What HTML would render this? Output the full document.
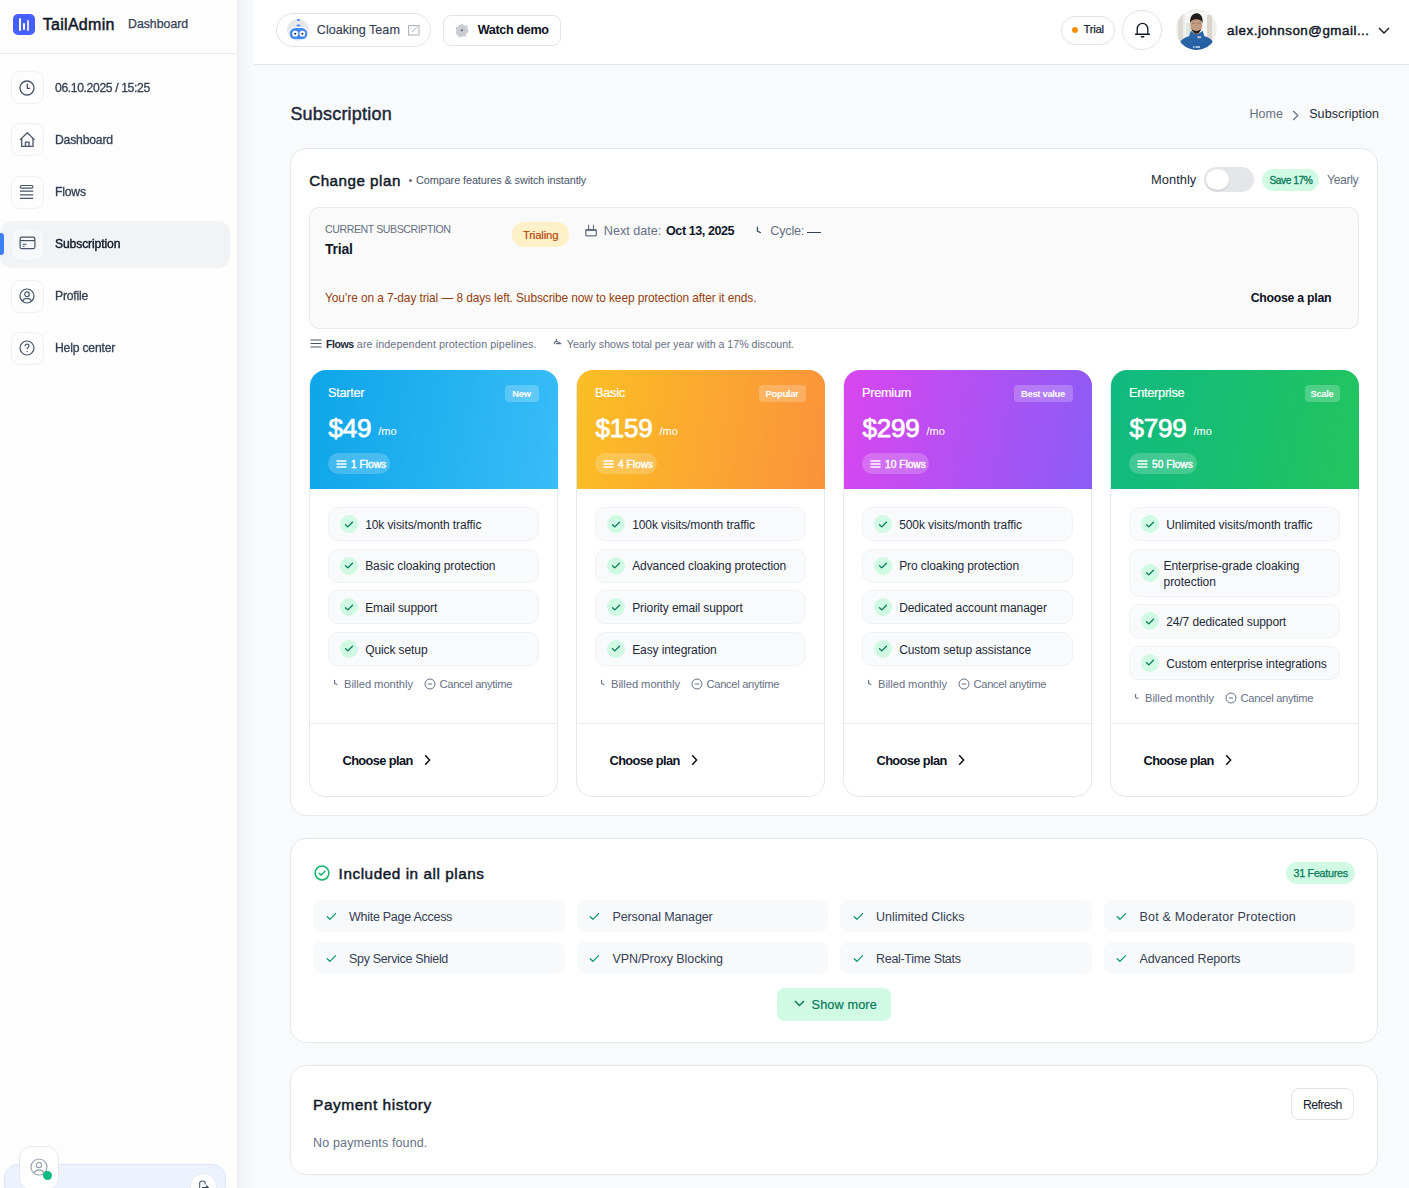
<!DOCTYPE html>
<html><head><meta charset="utf-8"><title>Subscription</title>
<style>
html,body{margin:0;padding:0;}
body{width:1409px;height:1188px;overflow:hidden;position:relative;background:#f9fafb;font-family:"Liberation Sans",sans-serif;}
.t{position:absolute;white-space:nowrap;line-height:1;}
.g{will-change:transform;}
.b{position:absolute;box-sizing:border-box;}
</style></head><body>

<div class="b" style="left:0.00px;top:0.00px;width:238.00px;height:1188.00px;background:#fdfdfd;border-right:1px solid #e9ebef;"></div>
<div class="b" style="left:238.00px;top:0.00px;width:16.00px;height:1188.00px;background:linear-gradient(90deg,#eff1f4,#f6f7f9 60%,#f9fafb);"></div>
<div class="b" style="left:0.00px;top:53.00px;width:237.00px;height:1.00px;background:#e9ebee;"></div>
<div class="b" style="left:13.00px;top:14.00px;width:21.50px;height:21.00px;background:#465fff;border-radius:5px;"></div>
<div class="b" style="left:18.80px;top:18.00px;width:2.20px;height:12.50px;background:#fff;border-radius:1px;"></div>
<div class="b" style="left:23.00px;top:23.00px;width:2.00px;height:7.00px;background:#fff;border-radius:1px;"></div>
<div class="b" style="left:27.00px;top:20.00px;width:2.00px;height:10.50px;background:#dfe3ff;border-radius:1px;"></div>
<div class="t" style="left:42.70px;top:17.46px;font-size:16px;font-weight:400;color:#101828;letter-spacing:0.3px;-webkit-text-stroke:0.5px #101828;">TailAdmin</div>
<div class="t" style="left:128.00px;top:18.39px;font-size:12.3px;font-weight:400;color:#344054;letter-spacing:0px;-webkit-text-stroke:0.25px #344054;">Dashboard</div>
<div class="b" style="left:0.00px;top:220.70px;width:230.00px;height:47.10px;background:#f2f3f5;border-radius:12px;"></div>
<div class="b" style="left:0.00px;top:232.60px;width:4.00px;height:22.80px;background:#3b82f6;border-radius:0 3px 3px 0;"></div>
<div class="b" style="left:10.50px;top:71.00px;width:33.00px;height:33.00px;background:#fdfdfe;border:1px solid #eef0f3;border-radius:9px;"></div>
<div class="t g" style="left:54.50px;top:81.67px;font-size:12.2px;font-weight:400;color:#344054;letter-spacing:-0.38px;-webkit-text-stroke:0.3px #344054;">06.10.2025 / 15:25</div>
<div class="b" style="left:10.50px;top:123.00px;width:33.00px;height:33.00px;background:#fdfdfe;border:1px solid #eef0f3;border-radius:9px;"></div>
<div class="t g" style="left:54.50px;top:133.67px;font-size:12.2px;font-weight:400;color:#344054;letter-spacing:-0.2px;-webkit-text-stroke:0.3px #344054;">Dashboard</div>
<div class="b" style="left:10.50px;top:175.50px;width:33.00px;height:33.00px;background:#fdfdfe;border:1px solid #eef0f3;border-radius:9px;"></div>
<div class="t g" style="left:54.50px;top:186.17px;font-size:12.2px;font-weight:400;color:#344054;letter-spacing:-0.2px;-webkit-text-stroke:0.3px #344054;">Flows</div>
<div class="b" style="left:10.50px;top:227.50px;width:33.00px;height:33.00px;background:#f7f8fa;border:1px solid #eef0f3;border-radius:9px;"></div>
<div class="t g" style="left:54.50px;top:238.17px;font-size:12.2px;font-weight:400;color:#101828;letter-spacing:-0.15px;-webkit-text-stroke:0.4px #101828;">Subscription</div>
<div class="b" style="left:10.50px;top:279.50px;width:33.00px;height:33.00px;background:#fdfdfe;border:1px solid #eef0f3;border-radius:9px;"></div>
<div class="t g" style="left:54.50px;top:290.17px;font-size:12.2px;font-weight:400;color:#344054;letter-spacing:-0.2px;-webkit-text-stroke:0.3px #344054;">Profile</div>
<div class="b" style="left:10.50px;top:331.50px;width:33.00px;height:33.00px;background:#fdfdfe;border:1px solid #eef0f3;border-radius:9px;"></div>
<div class="t g" style="left:54.50px;top:342.17px;font-size:12.2px;font-weight:400;color:#344054;letter-spacing:-0.2px;-webkit-text-stroke:0.3px #344054;">Help center</div>
<svg class="b" style="left:18.50px;top:79.50px;" width="16" height="16" viewBox="0 16 16" fill="none"><circle cx="8" cy="8" r="7" stroke="#475467" stroke-width="1.3"/><path d="M8.3 3.6V8.3H11.2" stroke="#475467" stroke-width="1.3"/></svg>
<svg class="b" style="left:18.50px;top:131.00px;" width="16" height="17" viewBox="0 0 16 17" fill="none"><path d="M1 8.9L8.3 1.8L15.6 8.9" stroke="#475467" stroke-width="1.3" stroke-linejoin="round"/><path d="M2.7 7.2V15.4H14V7.2" stroke="#475467" stroke-width="1.3"/><path d="M6.5 15.4V11.2H10V15.4" stroke="#475467" stroke-width="1.3"/></svg>
<svg class="b" style="left:19.00px;top:183.50px;" width="16" height="16" viewBox="0 0 16 16" fill="none"><rect x="1.2" y="1.5" width="12.8" height="2.6" rx="1.3" stroke="#475467" stroke-width="1.1"/><path d="M1 7.2H14.2M1 10.8H14.2M1 14.4H14.2" stroke="#475467" stroke-width="1.2"/></svg>
<svg class="b" style="left:18.50px;top:236.00px;" width="17" height="14" viewBox="0 0 17 14" fill="none"><rect x="1.1" y="1.1" width="14.8" height="11.6" rx="1.8" stroke="#475467" stroke-width="1.2"/><path d="M1.1 4.6H15.9" stroke="#475467" stroke-width="1.2"/><path d="M3.6 8.2H7.4M3.6 10.2H5.6" stroke="#475467" stroke-width="1.1"/></svg>
<svg class="b" style="left:18.50px;top:287.50px;" width="16" height="16" viewBox="0 0 16 16" fill="none"><circle cx="8" cy="8" r="7" stroke="#475467" stroke-width="1.2"/><circle cx="8" cy="6.2" r="2.3" stroke="#475467" stroke-width="1.2"/><path d="M3.4 13.2C4.4 11.2 6 10.4 8 10.4C10 10.4 11.6 11.2 12.6 13.2" stroke="#475467" stroke-width="1.2"/></svg>
<svg class="b" style="left:18.50px;top:339.50px;" width="16" height="16" viewBox="0 0 16 16" fill="none"><circle cx="8" cy="8" r="7" stroke="#475467" stroke-width="1.2"/><path d="M6 6.2C6 5 6.9 4.2 8 4.2C9.1 4.2 10 5 10 6.1C10 7.3 8.2 7.6 8.2 9.2" stroke="#475467" stroke-width="1.2"/><circle cx="8.1" cy="11.6" r="0.7" fill="#475467"/></svg>
<div class="b" style="left:4.30px;top:1164.00px;width:221.40px;height:36.00px;background:#ecf3fe;border:1px solid #d9e6fb;border-radius:14px;"></div>
<div class="b" style="left:18.70px;top:1146.20px;width:40.60px;height:43.80px;background:#fff;border:1px solid #e6e8ec;border-radius:12px;"></div>
<svg class="b" style="left:30.00px;top:1157.50px;" width="18" height="18" viewBox="0 0 18 18" fill="none"><circle cx="9" cy="9" r="8" stroke="#98a2b3" stroke-width="1.2"/><circle cx="9" cy="7" r="2.6" stroke="#98a2b3" stroke-width="1.2"/><path d="M4 14.8C5 12.6 6.8 11.8 9 11.8C11.2 11.8 13 12.6 14 14.8" stroke="#98a2b3" stroke-width="1.2"/></svg>
<div class="b" style="left:43.00px;top:1171.00px;width:9.00px;height:9.00px;background:#10b981;border-radius:50%;"></div>
<div class="b" style="left:189.50px;top:1173.00px;width:27.50px;height:32.00px;background:#fff;border:1px solid #e6e8ec;border-radius:13px;"></div>
<svg class="b" style="left:197.50px;top:1180.00px;" width="12" height="9" viewBox="0 0 12 9" fill="none"><path d="M1.6 9V3.6C1.6 2 2.5 1.1 4 1.1H4.8C6.3 1.1 7.2 2 7.2 3.6V4.6" stroke="#667085" stroke-width="1.3"/><path d="M4.5 7.6H10.2M8.6 6L10.3 7.6" stroke="#344054" stroke-width="1.3" stroke-linecap="round"/></svg>
<div class="b" style="left:254.00px;top:0.00px;width:1155.00px;height:65.00px;background:#fff;border-bottom:1px solid #e4e7ec;"></div>
<div class="b" style="left:276.00px;top:13.20px;width:154.70px;height:33.40px;background:#fff;border:1px solid #e1e4ea;border-radius:17px;"></div>
<svg class="b" style="left:287.00px;top:18.90px;" width="22" height="22" viewBox="0 0 22 22" fill="none"><circle cx="11" cy="11" r="11" fill="#e5e7eb"/><rect x="1.6" y="8.1" width="19.8" height="13.2" rx="6.6" fill="#fff"/><rect x="2.6" y="9.1" width="17.8" height="11.2" rx="5.6" fill="#4688ee"/><circle cx="8.2" cy="14.7" r="2.9" fill="#fff"/><circle cx="15.4" cy="14.7" r="2.9" fill="#fff"/><circle cx="8.2" cy="14.7" r="1.05" fill="#1f2937"/><circle cx="15.4" cy="14.7" r="1.05" fill="#1f2937"/><ellipse cx="11.5" cy="1" rx="1.6" ry="0.9" fill="#4688ee"/><path d="M11.5 2V5.5" stroke="#f3f4f6" stroke-width="0.8"/><path d="M9.3 7.3C9.6 6.2 10.5 5.6 11.5 5.6C12.5 5.6 13.4 6.2 13.7 7.3Z" fill="#4688ee"/></svg>
<div class="t" style="left:316.80px;top:23.93px;font-size:12.6px;font-weight:400;color:#344054;letter-spacing:0px;-webkit-text-stroke:0.15px #344054;">Cloaking Team</div>
<svg class="b" style="left:407.50px;top:25.00px;" width="12" height="11" viewBox="0 0 12 11" fill="none"><rect x="0.6" y="0.6" width="10.4" height="9.4" stroke="#b0b6c0" stroke-width="1.1"/><path d="M4 7L9.6 1.6" stroke="#b0b6c0" stroke-width="1"/></svg>
<div class="b" style="left:442.50px;top:15.10px;width:118.20px;height:30.70px;background:#fff;border:1px solid #e1e4ea;border-radius:8px;"></div>
<svg class="b" style="left:455.00px;top:23.00px;" width="14" height="15" viewBox="0 0 14 15" fill="none"><path d="M7 0.6L9.3 2.4L12.2 2.6L12.7 5.6L13.6 8.3L11.6 10.6L10.6 13.4L7.6 13.5L4.7 14.4L2.7 12.2L0.6 10.5L1.3 7.5L0.6 4.6L3.2 3.1Z" fill="#c9ccd2"/><path d="M5.3 7.4L7.6 6.1V8.6Z" fill="#4b5563"/></svg>
<div class="t" style="left:477.70px;top:24.13px;font-size:12.6px;font-weight:700;color:#0c111d;letter-spacing:-0.35px;">Watch demo</div>
<div class="b" style="left:1061.10px;top:16.20px;width:53.70px;height:28.40px;background:#fff;border:1px solid #e1e4ea;border-radius:14px;"></div>
<div class="b" style="left:1072.00px;top:26.90px;width:6.00px;height:6.00px;background:#f79009;border-radius:50%;"></div>
<div class="t" style="left:1083.40px;top:24.37px;font-size:11.5px;font-weight:400;color:#1d2939;letter-spacing:-0.3px;-webkit-text-stroke:0.25px #1d2939;">Trial</div>
<div class="b" style="left:1122.00px;top:10.10px;width:39.60px;height:39.60px;background:#fff;border:1px solid #e1e4ea;border-radius:50%;"></div>
<svg class="b" style="left:1133.50px;top:21.00px;" width="17" height="18" viewBox="0 0 17 18" fill="none"><path d="M3.2 13V8.2C3.2 4.8 5.5 2.3 8.5 2.3C11.5 2.3 13.8 4.8 13.8 8.2V13" stroke="#111827" stroke-width="1.3"/><path d="M1.6 13.3H15.4" stroke="#111827" stroke-width="1.4" stroke-linecap="round"/><path d="M7.3 15.8H9.7" stroke="#111827" stroke-width="1.5" stroke-linecap="round"/></svg>
<svg class="b" style="left:1175.70px;top:8.80px;" width="41" height="41" viewBox="0 0 41 41" fill="none"><defs><clipPath id="av"><circle cx="20.5" cy="20.5" r="20.4"/></clipPath><linearGradient id="hood" x1="0" y1="0" x2="1" y2="1"><stop offset="0" stop-color="#2f6db0"/><stop offset="1" stop-color="#21589a"/></linearGradient></defs><g clip-path="url(#av)"><rect width="41" height="41" fill="#eeeeec"/><rect x="9" y="3" width="23" height="26" fill="#f6f7f5"/><rect x="2" y="6" width="5" height="30" fill="#ddd9d2"/><rect x="31" y="6" width="5" height="30" fill="#ddd5cc"/><rect x="10" y="14" width="5" height="12" fill="#dfe6dc"/><path d="M1.5 41C2.5 32 7.5 28.5 13 27.2L15 21.5C17 25.5 24 25.5 26.5 21.5L28.5 27.2C34 28.5 38.5 32 39.5 41Z" fill="url(#hood)"/><path d="M21 27.2H25.5L24.5 29.2H22Z" fill="#c9cdd2"/><rect x="17.8" y="20" width="5.6" height="5" fill="#b08468"/><ellipse cx="20.3" cy="16.2" rx="6" ry="7.4" fill="#c39c80"/><path d="M14.1 14.6C13.6 7.6 16.8 4.3 20.4 4.3C24.1 4.3 27.1 6.6 26.6 14.4C25.8 11.4 23.6 10.2 20.3 10.2C17 10.2 14.9 11.4 14.1 14.6Z" fill="#1f1b1a"/><path d="M15.3 19.5C16.3 23.5 18.4 24.6 20.3 24.6C22.3 24.6 24.3 23.5 25.2 19.5C23.8 21.3 22.2 21.9 20.3 21.9C18.4 21.9 16.8 21.3 15.3 19.5Z" fill="#2b221e"/><path d="M16 14.2H19.3M21.5 14.2H24.8" stroke="#6d5d55" stroke-width="0.9" opacity="0.6"/><path d="M17 38H18.5M19.5 38H24" stroke="#cfe1f5" stroke-width="1.3"/></g></svg>
<div class="t" style="left:1227.10px;top:24.26px;font-size:13.4px;font-weight:400;color:#101828;letter-spacing:0.5px;-webkit-text-stroke:0.45px #101828;">alex.johnson@gmail...</div>
<svg class="b" style="left:1377.50px;top:26.50px;" width="12" height="7" viewBox="0 0 12 7" fill="none"><path d="M1 1L6 6L11 1" stroke="#111827" stroke-width="1.4"/></svg>
<div class="t" style="left:290.40px;top:104.76px;font-size:18px;font-weight:400;color:#1d2939;letter-spacing:0.2px;-webkit-text-stroke:0.45px #1d2939;">Subscription</div>
<div class="t" style="left:1249.60px;top:108.42px;font-size:12.5px;font-weight:400;color:#667085;letter-spacing:0px;">Home</div>
<svg class="b" style="left:1292.00px;top:109.50px;" width="7" height="11" viewBox="0 0 7 11" fill="none"><path d="M1.2 1L5.8 5.5L1.2 10" stroke="#667085" stroke-width="1.2"/></svg>
<div class="t" style="left:1309.20px;top:108.42px;font-size:12.5px;font-weight:400;color:#1d2939;letter-spacing:0.1px;">Subscription</div>
<div class="b" style="left:290.00px;top:148.00px;width:1088.00px;height:668.00px;background:#fff;border:1px solid #e4e7ec;border-radius:16px;"></div>
<div class="t" style="left:309.20px;top:172.53px;font-size:15.2px;font-weight:400;color:#101828;letter-spacing:0.5px;-webkit-text-stroke:0.45px #101828;">Change plan</div>
<div class="b" style="left:409.00px;top:179.00px;width:3.00px;height:3.00px;background:#667085;border-radius:50%;"></div>
<div class="t" style="left:416.00px;top:174.97px;font-size:10.9px;font-weight:400;color:#475467;letter-spacing:-0.1px;">Compare features &amp; switch instantly</div>
<div class="t" style="left:1151.10px;top:173.58px;font-size:12.9px;font-weight:400;color:#1d2939;letter-spacing:0px;">Monthly</div>
<div class="b" style="left:1204.00px;top:167.30px;width:49.80px;height:24.50px;background:#e4e6ea;border-radius:13px;"></div>
<div class="b" style="left:1206.30px;top:169.30px;width:23.00px;height:20.70px;background:#fff;border-radius:50%;box-shadow:0 1px 2px rgba(16,24,40,.15);"></div>
<div class="b" style="left:1262.10px;top:169.00px;width:56.60px;height:22.00px;background:#d1fae5;border-radius:11px;"></div>
<div class="t" style="left:1269.50px;top:175.67px;font-size:10.2px;font-weight:400;color:#047857;letter-spacing:-0.45px;-webkit-text-stroke:0.3px #047857;">Save 17%</div>
<div class="t" style="left:1327.00px;top:174.17px;font-size:12.2px;font-weight:400;color:#667085;letter-spacing:-0.35px;">Yearly</div>
<div class="b" style="left:309.00px;top:207.00px;width:1050.00px;height:122.00px;background:#fafafa;border:1px solid #e4e7ec;border-radius:10px;"></div>
<div class="t" style="left:325.00px;top:224.03px;font-size:10.6px;font-weight:400;color:#667085;letter-spacing:-0.42px;">CURRENT SUBSCRIPTION</div>
<div class="t" style="left:325.00px;top:242.15px;font-size:14px;font-weight:700;color:#101828;letter-spacing:-0.2px;">Trial</div>
<div class="b" style="left:512.00px;top:222.00px;width:57.30px;height:24.70px;background:#fef0c7;border-radius:12px;"></div>
<div class="t" style="left:522.90px;top:229.83px;font-size:11.3px;font-weight:400;color:#b54708;letter-spacing:-0.15px;-webkit-text-stroke:0.2px #b54708;">Trialing</div>
<svg class="b" style="left:584.00px;top:224.00px;" width="14" height="13" viewBox="0 0 14 13" fill="none"><rect x="1.8" y="5.6" width="10.6" height="6.2" rx="1.2" stroke="#667085" stroke-width="1.3"/><path d="M1.8 6.1H12.4" stroke="#667085" stroke-width="1.9"/><path d="M4.6 1.2V5M9.5 1.2V5" stroke="#667085" stroke-width="1.2" stroke-linecap="round"/></svg>
<div class="t" style="left:603.80px;top:225.33px;font-size:12.6px;font-weight:400;color:#667085;letter-spacing:0px;">Next date:</div>
<div class="t" style="left:666.00px;top:225.33px;font-size:12.6px;font-weight:700;color:#101828;letter-spacing:-0.45px;">Oct 13, 2025</div>
<svg class="b" style="left:755.50px;top:226.00px;" width="6" height="8" viewBox="0 0 6 8" fill="none"><path d="M1.4 1.2V5.2L4.4 6.6" stroke="#475467" stroke-width="1.3" stroke-linecap="round"/></svg>
<div class="t" style="left:770.30px;top:225.33px;font-size:12.6px;font-weight:400;color:#667085;letter-spacing:-0.2px;">Cycle:</div>
<div class="b" style="left:807.00px;top:231.60px;width:13.50px;height:1.20px;background:#344054;"></div>
<div class="t" style="left:325.00px;top:292.93px;font-size:11.9px;font-weight:400;color:#92400e;letter-spacing:-0.09px;">You’re on a 7-day trial — 8 days left. Subscribe now to keep protection after it ends.</div>
<div class="t" style="left:1250.70px;top:292.19px;font-size:12.3px;font-weight:700;color:#0c111d;letter-spacing:-0.27px;">Choose a plan</div>
<svg class="b" style="left:309.50px;top:339.00px;" width="12" height="9" viewBox="0 0 12 9" fill="none"><path d="M0.5 1H11.5M0.5 4.5H11.5M0.5 8H11.5" stroke="#475467" stroke-width="1.2"/></svg>
<div class="t" style="left:326.00px;top:338.73px;font-size:10.6px;font-weight:700;color:#1d2939;letter-spacing:-0.5px;">Flows</div>
<div class="t" style="left:356.80px;top:338.56px;font-size:10.8px;font-weight:400;color:#667085;letter-spacing:0.075px;">are independent protection pipelines.</div>
<svg class="b" style="left:553.00px;top:338.00px;" width="9" height="7" viewBox="0 0 9 7" fill="none"><path d="M1.3 5.8C1.5 4 2.5 3.3 3.4 3.3M3.4 1.2V3.3L7.8 5.6H3.2" stroke="#667085" stroke-width="1.15" stroke-linecap="round" stroke-linejoin="round"/></svg>
<div class="t" style="left:566.80px;top:338.64px;font-size:10.7px;font-weight:400;color:#667085;letter-spacing:-0.035px;">Yearly shows total per year with a 17% discount.</div>
<div class="b" style="left:309.00px;top:370.00px;width:249.00px;height:427.00px;background:#fff;border:1px solid #e4e7ec;border-radius:16px;"></div>
<div class="b" style="left:309.50px;top:370.00px;width:248.00px;height:119.00px;background:linear-gradient(100deg,#0ea5e9,#38bdf8);border-radius:16px 16px 0 0;"></div>
<div class="t" style="left:328.00px;top:387.16px;font-size:12.8px;font-weight:400;color:#fff;letter-spacing:-0.3px;-webkit-text-stroke:0.2px #fff;">Starter</div>
<div class="b" style="left:504.50px;top:385.00px;width:34.00px;height:16.50px;background:rgba(255,255,255,.22);border-radius:4px;"></div>
<div class="t" style="left:504.50px;width:34px;text-align:center;top:388.54px;font-size:9.4px;font-weight:700;color:#fff;letter-spacing:-0.3px">New</div>
<div class="t" style="left:328.50px;top:414.79px;font-size:26px;font-weight:400;color:#fff;letter-spacing:-0.2px;-webkit-text-stroke:0.75px #fff;">$49<span style="font-size:11px;font-weight:400;letter-spacing:0px;margin-left:7px;position:relative;top:-2px;-webkit-text-stroke:0.15px #fff;color:rgba(255,255,255,.95)">/mo</span></div>
<div class="b" style="left:327.70px;top:453.00px;width:62.00px;height:20.80px;background:rgba(255,255,255,.2);border-radius:11px;"></div>
<svg class="b" style="left:335.50px;top:459.50px;" width="11" height="8" viewBox="0 0 11 8" fill="none"><path d="M0.5 1H10.5M0.5 4H10.5M0.5 7H10.5" stroke="#fff" stroke-width="1.3"/></svg>
<div class="t" style="left:351.00px;top:459.57px;font-size:10.2px;font-weight:400;color:#fff;letter-spacing:0px;-webkit-text-stroke:0.4px #fff;">1 Flows</div>
<div class="b" style="left:328.00px;top:507.00px;width:210.50px;height:34.00px;background:#f9fafb;border:1px solid #f0f1f4;border-radius:10px;"></div>
<div class="b" style="left:339.50px;top:515.00px;width:18.00px;height:18.00px;background:#d1fae5;border-radius:50%;"></div>
<svg class="b" style="left:343.50px;top:519.50px;" width="10" height="9" viewBox="0 0 10 9" fill="none"><path d="M1.5 4.7L3.8 6.9L8.5 2.2" stroke="#047857" stroke-width="1.25" stroke-linecap="round" stroke-linejoin="round"/></svg>
<div class="t" style="left:365.20px;top:518.84px;font-size:12px;font-weight:400;color:#1d2939;letter-spacing:-0.1px;">10k visits/month traffic</div>
<div class="b" style="left:328.00px;top:548.60px;width:210.50px;height:34.00px;background:#f9fafb;border:1px solid #f0f1f4;border-radius:10px;"></div>
<div class="b" style="left:339.50px;top:556.60px;width:18.00px;height:18.00px;background:#d1fae5;border-radius:50%;"></div>
<svg class="b" style="left:343.50px;top:561.10px;" width="10" height="9" viewBox="0 0 10 9" fill="none"><path d="M1.5 4.7L3.8 6.9L8.5 2.2" stroke="#047857" stroke-width="1.25" stroke-linecap="round" stroke-linejoin="round"/></svg>
<div class="t" style="left:365.20px;top:560.44px;font-size:12px;font-weight:400;color:#1d2939;letter-spacing:-0.1px;">Basic cloaking protection</div>
<div class="b" style="left:328.00px;top:590.20px;width:210.50px;height:34.00px;background:#f9fafb;border:1px solid #f0f1f4;border-radius:10px;"></div>
<div class="b" style="left:339.50px;top:598.20px;width:18.00px;height:18.00px;background:#d1fae5;border-radius:50%;"></div>
<svg class="b" style="left:343.50px;top:602.70px;" width="10" height="9" viewBox="0 0 10 9" fill="none"><path d="M1.5 4.7L3.8 6.9L8.5 2.2" stroke="#047857" stroke-width="1.25" stroke-linecap="round" stroke-linejoin="round"/></svg>
<div class="t" style="left:365.20px;top:602.04px;font-size:12px;font-weight:400;color:#1d2939;letter-spacing:-0.1px;">Email support</div>
<div class="b" style="left:328.00px;top:631.80px;width:210.50px;height:34.00px;background:#f9fafb;border:1px solid #f0f1f4;border-radius:10px;"></div>
<div class="b" style="left:339.50px;top:639.80px;width:18.00px;height:18.00px;background:#d1fae5;border-radius:50%;"></div>
<svg class="b" style="left:343.50px;top:644.30px;" width="10" height="9" viewBox="0 0 10 9" fill="none"><path d="M1.5 4.7L3.8 6.9L8.5 2.2" stroke="#047857" stroke-width="1.25" stroke-linecap="round" stroke-linejoin="round"/></svg>
<div class="t" style="left:365.20px;top:643.64px;font-size:12px;font-weight:400;color:#1d2939;letter-spacing:-0.1px;">Quick setup</div>
<svg class="b" style="left:332.50px;top:679.30px;" width="6" height="7" viewBox="0 0 6 7" fill="none"><path d="M1.6 1.2V4.4L3.8 5.6" stroke="#667085" stroke-width="1.15" stroke-linecap="round"/></svg>
<div class="t" style="left:344.00px;top:679.32px;font-size:11.2px;font-weight:400;color:#667085;letter-spacing:-0.05px;">Billed monthly</div>
<svg class="b" style="left:423.50px;top:677.80px;" width="12" height="12" viewBox="0 0 12 12" fill="none"><circle cx="6" cy="6" r="5" stroke="#667085" stroke-width="1"/><path d="M3.8 6H8.2" stroke="#667085" stroke-width="1"/></svg>
<div class="t" style="left:439.50px;top:679.32px;font-size:11.2px;font-weight:400;color:#667085;letter-spacing:-0.32px;">Cancel anytime</div>
<div class="b" style="left:309.00px;top:723.00px;width:249.00px;height:1.00px;background:#e9ebef;"></div>
<div class="t" style="left:342.50px;top:754.66px;font-size:12.8px;font-weight:700;color:#0c111d;letter-spacing:-0.6px;">Choose plan</div>
<svg class="b" style="left:424.00px;top:754.00px;" width="7" height="12" viewBox="0 0 7 12" fill="none"><path d="M1.2 1.2L5.6 6L1.2 10.8" stroke="#0c111d" stroke-width="1.5"/></svg>
<div class="b" style="left:576.00px;top:370.00px;width:249.00px;height:427.00px;background:#fff;border:1px solid #e4e7ec;border-radius:16px;"></div>
<div class="b" style="left:576.50px;top:370.00px;width:248.00px;height:119.00px;background:linear-gradient(100deg,#fbbf24,#fb923c);border-radius:16px 16px 0 0;"></div>
<div class="t" style="left:595.00px;top:387.16px;font-size:12.8px;font-weight:400;color:#fff;letter-spacing:-0.3px;-webkit-text-stroke:0.2px #fff;">Basic</div>
<div class="b" style="left:758.50px;top:385.00px;width:47.00px;height:16.50px;background:rgba(255,255,255,.22);border-radius:4px;"></div>
<div class="t" style="left:758.50px;width:47px;text-align:center;top:388.54px;font-size:9.4px;font-weight:700;color:#fff;letter-spacing:-0.3px">Popular</div>
<div class="t" style="left:595.50px;top:414.79px;font-size:26px;font-weight:400;color:#fff;letter-spacing:-0.2px;-webkit-text-stroke:0.75px #fff;">$159<span style="font-size:11px;font-weight:400;letter-spacing:0px;margin-left:7px;position:relative;top:-2px;-webkit-text-stroke:0.15px #fff;color:rgba(255,255,255,.95)">/mo</span></div>
<div class="b" style="left:594.70px;top:453.00px;width:62.00px;height:20.80px;background:rgba(255,255,255,.2);border-radius:11px;"></div>
<svg class="b" style="left:602.50px;top:459.50px;" width="11" height="8" viewBox="0 0 11 8" fill="none"><path d="M0.5 1H10.5M0.5 4H10.5M0.5 7H10.5" stroke="#fff" stroke-width="1.3"/></svg>
<div class="t" style="left:618.00px;top:459.57px;font-size:10.2px;font-weight:400;color:#fff;letter-spacing:0px;-webkit-text-stroke:0.4px #fff;">4 Flows</div>
<div class="b" style="left:595.00px;top:507.00px;width:210.50px;height:34.00px;background:#f9fafb;border:1px solid #f0f1f4;border-radius:10px;"></div>
<div class="b" style="left:606.50px;top:515.00px;width:18.00px;height:18.00px;background:#d1fae5;border-radius:50%;"></div>
<svg class="b" style="left:610.50px;top:519.50px;" width="10" height="9" viewBox="0 0 10 9" fill="none"><path d="M1.5 4.7L3.8 6.9L8.5 2.2" stroke="#047857" stroke-width="1.25" stroke-linecap="round" stroke-linejoin="round"/></svg>
<div class="t" style="left:632.20px;top:518.84px;font-size:12px;font-weight:400;color:#1d2939;letter-spacing:-0.1px;">100k visits/month traffic</div>
<div class="b" style="left:595.00px;top:548.60px;width:210.50px;height:34.00px;background:#f9fafb;border:1px solid #f0f1f4;border-radius:10px;"></div>
<div class="b" style="left:606.50px;top:556.60px;width:18.00px;height:18.00px;background:#d1fae5;border-radius:50%;"></div>
<svg class="b" style="left:610.50px;top:561.10px;" width="10" height="9" viewBox="0 0 10 9" fill="none"><path d="M1.5 4.7L3.8 6.9L8.5 2.2" stroke="#047857" stroke-width="1.25" stroke-linecap="round" stroke-linejoin="round"/></svg>
<div class="t" style="left:632.20px;top:560.44px;font-size:12px;font-weight:400;color:#1d2939;letter-spacing:-0.1px;">Advanced cloaking protection</div>
<div class="b" style="left:595.00px;top:590.20px;width:210.50px;height:34.00px;background:#f9fafb;border:1px solid #f0f1f4;border-radius:10px;"></div>
<div class="b" style="left:606.50px;top:598.20px;width:18.00px;height:18.00px;background:#d1fae5;border-radius:50%;"></div>
<svg class="b" style="left:610.50px;top:602.70px;" width="10" height="9" viewBox="0 0 10 9" fill="none"><path d="M1.5 4.7L3.8 6.9L8.5 2.2" stroke="#047857" stroke-width="1.25" stroke-linecap="round" stroke-linejoin="round"/></svg>
<div class="t" style="left:632.20px;top:602.04px;font-size:12px;font-weight:400;color:#1d2939;letter-spacing:-0.1px;">Priority email support</div>
<div class="b" style="left:595.00px;top:631.80px;width:210.50px;height:34.00px;background:#f9fafb;border:1px solid #f0f1f4;border-radius:10px;"></div>
<div class="b" style="left:606.50px;top:639.80px;width:18.00px;height:18.00px;background:#d1fae5;border-radius:50%;"></div>
<svg class="b" style="left:610.50px;top:644.30px;" width="10" height="9" viewBox="0 0 10 9" fill="none"><path d="M1.5 4.7L3.8 6.9L8.5 2.2" stroke="#047857" stroke-width="1.25" stroke-linecap="round" stroke-linejoin="round"/></svg>
<div class="t" style="left:632.20px;top:643.64px;font-size:12px;font-weight:400;color:#1d2939;letter-spacing:-0.1px;">Easy integration</div>
<svg class="b" style="left:599.50px;top:679.30px;" width="6" height="7" viewBox="0 0 6 7" fill="none"><path d="M1.6 1.2V4.4L3.8 5.6" stroke="#667085" stroke-width="1.15" stroke-linecap="round"/></svg>
<div class="t" style="left:611.00px;top:679.32px;font-size:11.2px;font-weight:400;color:#667085;letter-spacing:-0.05px;">Billed monthly</div>
<svg class="b" style="left:690.50px;top:677.80px;" width="12" height="12" viewBox="0 0 12 12" fill="none"><circle cx="6" cy="6" r="5" stroke="#667085" stroke-width="1"/><path d="M3.8 6H8.2" stroke="#667085" stroke-width="1"/></svg>
<div class="t" style="left:706.50px;top:679.32px;font-size:11.2px;font-weight:400;color:#667085;letter-spacing:-0.32px;">Cancel anytime</div>
<div class="b" style="left:576.00px;top:723.00px;width:249.00px;height:1.00px;background:#e9ebef;"></div>
<div class="t" style="left:609.50px;top:754.66px;font-size:12.8px;font-weight:700;color:#0c111d;letter-spacing:-0.6px;">Choose plan</div>
<svg class="b" style="left:691.00px;top:754.00px;" width="7" height="12" viewBox="0 0 7 12" fill="none"><path d="M1.2 1.2L5.6 6L1.2 10.8" stroke="#0c111d" stroke-width="1.5"/></svg>
<div class="b" style="left:843.00px;top:370.00px;width:249.00px;height:427.00px;background:#fff;border:1px solid #e4e7ec;border-radius:16px;"></div>
<div class="b" style="left:843.50px;top:370.00px;width:248.00px;height:119.00px;background:linear-gradient(100deg,#d946ef,#8b5cf6);border-radius:16px 16px 0 0;"></div>
<div class="t" style="left:862.00px;top:387.16px;font-size:12.8px;font-weight:400;color:#fff;letter-spacing:-0.3px;-webkit-text-stroke:0.2px #fff;">Premium</div>
<div class="b" style="left:1013.50px;top:385.00px;width:59.00px;height:16.50px;background:rgba(255,255,255,.22);border-radius:4px;"></div>
<div class="t" style="left:1013.50px;width:59px;text-align:center;top:388.54px;font-size:9.4px;font-weight:700;color:#fff;letter-spacing:-0.3px">Best value</div>
<div class="t" style="left:862.50px;top:414.79px;font-size:26px;font-weight:400;color:#fff;letter-spacing:-0.2px;-webkit-text-stroke:0.75px #fff;">$299<span style="font-size:11px;font-weight:400;letter-spacing:0px;margin-left:7px;position:relative;top:-2px;-webkit-text-stroke:0.15px #fff;color:rgba(255,255,255,.95)">/mo</span></div>
<div class="b" style="left:861.70px;top:453.00px;width:67.00px;height:20.80px;background:rgba(255,255,255,.2);border-radius:11px;"></div>
<svg class="b" style="left:869.50px;top:459.50px;" width="11" height="8" viewBox="0 0 11 8" fill="none"><path d="M0.5 1H10.5M0.5 4H10.5M0.5 7H10.5" stroke="#fff" stroke-width="1.3"/></svg>
<div class="t" style="left:885.00px;top:459.57px;font-size:10.2px;font-weight:400;color:#fff;letter-spacing:0px;-webkit-text-stroke:0.4px #fff;">10 Flows</div>
<div class="b" style="left:862.00px;top:507.00px;width:210.50px;height:34.00px;background:#f9fafb;border:1px solid #f0f1f4;border-radius:10px;"></div>
<div class="b" style="left:873.50px;top:515.00px;width:18.00px;height:18.00px;background:#d1fae5;border-radius:50%;"></div>
<svg class="b" style="left:877.50px;top:519.50px;" width="10" height="9" viewBox="0 0 10 9" fill="none"><path d="M1.5 4.7L3.8 6.9L8.5 2.2" stroke="#047857" stroke-width="1.25" stroke-linecap="round" stroke-linejoin="round"/></svg>
<div class="t" style="left:899.20px;top:518.84px;font-size:12px;font-weight:400;color:#1d2939;letter-spacing:-0.1px;">500k visits/month traffic</div>
<div class="b" style="left:862.00px;top:548.60px;width:210.50px;height:34.00px;background:#f9fafb;border:1px solid #f0f1f4;border-radius:10px;"></div>
<div class="b" style="left:873.50px;top:556.60px;width:18.00px;height:18.00px;background:#d1fae5;border-radius:50%;"></div>
<svg class="b" style="left:877.50px;top:561.10px;" width="10" height="9" viewBox="0 0 10 9" fill="none"><path d="M1.5 4.7L3.8 6.9L8.5 2.2" stroke="#047857" stroke-width="1.25" stroke-linecap="round" stroke-linejoin="round"/></svg>
<div class="t" style="left:899.20px;top:560.44px;font-size:12px;font-weight:400;color:#1d2939;letter-spacing:-0.1px;">Pro cloaking protection</div>
<div class="b" style="left:862.00px;top:590.20px;width:210.50px;height:34.00px;background:#f9fafb;border:1px solid #f0f1f4;border-radius:10px;"></div>
<div class="b" style="left:873.50px;top:598.20px;width:18.00px;height:18.00px;background:#d1fae5;border-radius:50%;"></div>
<svg class="b" style="left:877.50px;top:602.70px;" width="10" height="9" viewBox="0 0 10 9" fill="none"><path d="M1.5 4.7L3.8 6.9L8.5 2.2" stroke="#047857" stroke-width="1.25" stroke-linecap="round" stroke-linejoin="round"/></svg>
<div class="t" style="left:899.20px;top:602.04px;font-size:12px;font-weight:400;color:#1d2939;letter-spacing:-0.1px;">Dedicated account manager</div>
<div class="b" style="left:862.00px;top:631.80px;width:210.50px;height:34.00px;background:#f9fafb;border:1px solid #f0f1f4;border-radius:10px;"></div>
<div class="b" style="left:873.50px;top:639.80px;width:18.00px;height:18.00px;background:#d1fae5;border-radius:50%;"></div>
<svg class="b" style="left:877.50px;top:644.30px;" width="10" height="9" viewBox="0 0 10 9" fill="none"><path d="M1.5 4.7L3.8 6.9L8.5 2.2" stroke="#047857" stroke-width="1.25" stroke-linecap="round" stroke-linejoin="round"/></svg>
<div class="t" style="left:899.20px;top:643.64px;font-size:12px;font-weight:400;color:#1d2939;letter-spacing:-0.1px;">Custom setup assistance</div>
<svg class="b" style="left:866.50px;top:679.30px;" width="6" height="7" viewBox="0 0 6 7" fill="none"><path d="M1.6 1.2V4.4L3.8 5.6" stroke="#667085" stroke-width="1.15" stroke-linecap="round"/></svg>
<div class="t" style="left:878.00px;top:679.32px;font-size:11.2px;font-weight:400;color:#667085;letter-spacing:-0.05px;">Billed monthly</div>
<svg class="b" style="left:957.50px;top:677.80px;" width="12" height="12" viewBox="0 0 12 12" fill="none"><circle cx="6" cy="6" r="5" stroke="#667085" stroke-width="1"/><path d="M3.8 6H8.2" stroke="#667085" stroke-width="1"/></svg>
<div class="t" style="left:973.50px;top:679.32px;font-size:11.2px;font-weight:400;color:#667085;letter-spacing:-0.32px;">Cancel anytime</div>
<div class="b" style="left:843.00px;top:723.00px;width:249.00px;height:1.00px;background:#e9ebef;"></div>
<div class="t" style="left:876.50px;top:754.66px;font-size:12.8px;font-weight:700;color:#0c111d;letter-spacing:-0.6px;">Choose plan</div>
<svg class="b" style="left:958.00px;top:754.00px;" width="7" height="12" viewBox="0 0 7 12" fill="none"><path d="M1.2 1.2L5.6 6L1.2 10.8" stroke="#0c111d" stroke-width="1.5"/></svg>
<div class="b" style="left:1110.00px;top:370.00px;width:249.00px;height:427.00px;background:#fff;border:1px solid #e4e7ec;border-radius:16px;"></div>
<div class="b" style="left:1110.50px;top:370.00px;width:248.00px;height:119.00px;background:linear-gradient(100deg,#10b981,#22c55e);border-radius:16px 16px 0 0;"></div>
<div class="t" style="left:1129.00px;top:387.16px;font-size:12.8px;font-weight:400;color:#fff;letter-spacing:-0.3px;-webkit-text-stroke:0.2px #fff;">Enterprise</div>
<div class="b" style="left:1304.50px;top:385.00px;width:35.00px;height:16.50px;background:rgba(255,255,255,.22);border-radius:4px;"></div>
<div class="t" style="left:1304.50px;width:35px;text-align:center;top:388.54px;font-size:9.4px;font-weight:700;color:#fff;letter-spacing:-0.3px">Scale</div>
<div class="t" style="left:1129.50px;top:414.79px;font-size:26px;font-weight:400;color:#fff;letter-spacing:-0.2px;-webkit-text-stroke:0.75px #fff;">$799<span style="font-size:11px;font-weight:400;letter-spacing:0px;margin-left:7px;position:relative;top:-2px;-webkit-text-stroke:0.15px #fff;color:rgba(255,255,255,.95)">/mo</span></div>
<div class="b" style="left:1128.70px;top:453.00px;width:68.00px;height:20.80px;background:rgba(255,255,255,.2);border-radius:11px;"></div>
<svg class="b" style="left:1136.50px;top:459.50px;" width="11" height="8" viewBox="0 0 11 8" fill="none"><path d="M0.5 1H10.5M0.5 4H10.5M0.5 7H10.5" stroke="#fff" stroke-width="1.3"/></svg>
<div class="t" style="left:1152.00px;top:459.57px;font-size:10.2px;font-weight:400;color:#fff;letter-spacing:0px;-webkit-text-stroke:0.4px #fff;">50 Flows</div>
<div class="b" style="left:1129.00px;top:507.00px;width:210.50px;height:34.00px;background:#f9fafb;border:1px solid #f0f1f4;border-radius:10px;"></div>
<div class="b" style="left:1140.50px;top:515.00px;width:18.00px;height:18.00px;background:#d1fae5;border-radius:50%;"></div>
<svg class="b" style="left:1144.50px;top:519.50px;" width="10" height="9" viewBox="0 0 10 9" fill="none"><path d="M1.5 4.7L3.8 6.9L8.5 2.2" stroke="#047857" stroke-width="1.25" stroke-linecap="round" stroke-linejoin="round"/></svg>
<div class="t" style="left:1166.20px;top:518.84px;font-size:12px;font-weight:400;color:#1d2939;letter-spacing:-0.1px;">Unlimited visits/month traffic</div>
<div class="b" style="left:1129.00px;top:548.60px;width:210.50px;height:48.00px;background:#f9fafb;border:1px solid #f0f1f4;border-radius:10px;"></div>
<div class="b" style="left:1140.50px;top:563.60px;width:18.00px;height:18.00px;background:#d1fae5;border-radius:50%;"></div>
<svg class="b" style="left:1144.50px;top:568.10px;" width="10" height="9" viewBox="0 0 10 9" fill="none"><path d="M1.5 4.7L3.8 6.9L8.5 2.2" stroke="#047857" stroke-width="1.25" stroke-linecap="round" stroke-linejoin="round"/></svg>
<div class="t" style="left:1163.50px;top:559.94px;font-size:12px;font-weight:400;color:#1d2939;letter-spacing:-0.03px;">Enterprise-grade cloaking</div>
<div class="t" style="left:1163.50px;top:576.44px;font-size:12px;font-weight:400;color:#1d2939;letter-spacing:-0.03px;">protection</div>
<div class="b" style="left:1129.00px;top:604.20px;width:210.50px;height:34.00px;background:#f9fafb;border:1px solid #f0f1f4;border-radius:10px;"></div>
<div class="b" style="left:1140.50px;top:612.20px;width:18.00px;height:18.00px;background:#d1fae5;border-radius:50%;"></div>
<svg class="b" style="left:1144.50px;top:616.70px;" width="10" height="9" viewBox="0 0 10 9" fill="none"><path d="M1.5 4.7L3.8 6.9L8.5 2.2" stroke="#047857" stroke-width="1.25" stroke-linecap="round" stroke-linejoin="round"/></svg>
<div class="t" style="left:1166.20px;top:616.04px;font-size:12px;font-weight:400;color:#1d2939;letter-spacing:-0.1px;">24/7 dedicated support</div>
<div class="b" style="left:1129.00px;top:645.80px;width:210.50px;height:34.00px;background:#f9fafb;border:1px solid #f0f1f4;border-radius:10px;"></div>
<div class="b" style="left:1140.50px;top:653.80px;width:18.00px;height:18.00px;background:#d1fae5;border-radius:50%;"></div>
<svg class="b" style="left:1144.50px;top:658.30px;" width="10" height="9" viewBox="0 0 10 9" fill="none"><path d="M1.5 4.7L3.8 6.9L8.5 2.2" stroke="#047857" stroke-width="1.25" stroke-linecap="round" stroke-linejoin="round"/></svg>
<div class="t" style="left:1166.20px;top:657.64px;font-size:12px;font-weight:400;color:#1d2939;letter-spacing:-0.1px;">Custom enterprise integrations</div>
<svg class="b" style="left:1133.50px;top:693.30px;" width="6" height="7" viewBox="0 0 6 7" fill="none"><path d="M1.6 1.2V4.4L3.8 5.6" stroke="#667085" stroke-width="1.15" stroke-linecap="round"/></svg>
<div class="t" style="left:1145.00px;top:693.32px;font-size:11.2px;font-weight:400;color:#667085;letter-spacing:-0.05px;">Billed monthly</div>
<svg class="b" style="left:1224.50px;top:691.80px;" width="12" height="12" viewBox="0 0 12 12" fill="none"><circle cx="6" cy="6" r="5" stroke="#667085" stroke-width="1"/><path d="M3.8 6H8.2" stroke="#667085" stroke-width="1"/></svg>
<div class="t" style="left:1240.50px;top:693.32px;font-size:11.2px;font-weight:400;color:#667085;letter-spacing:-0.32px;">Cancel anytime</div>
<div class="b" style="left:1110.00px;top:723.00px;width:249.00px;height:1.00px;background:#e9ebef;"></div>
<div class="t" style="left:1143.50px;top:754.66px;font-size:12.8px;font-weight:700;color:#0c111d;letter-spacing:-0.6px;">Choose plan</div>
<svg class="b" style="left:1225.00px;top:754.00px;" width="7" height="12" viewBox="0 0 7 12" fill="none"><path d="M1.2 1.2L5.6 6L1.2 10.8" stroke="#0c111d" stroke-width="1.5"/></svg>
<div class="b" style="left:290.00px;top:838.00px;width:1088.00px;height:205.00px;background:#fff;border:1px solid #e4e7ec;border-radius:16px;"></div>
<svg class="b" style="left:314.00px;top:865.00px;" width="16" height="16" viewBox="0 0 16 16" fill="none"><circle cx="8" cy="8" r="6.9" stroke="#12b76a" stroke-width="1.5"/><path d="M5.2 8.3L7.2 10.1L10.9 6.3" stroke="#12b76a" stroke-width="1.5" stroke-linecap="round" stroke-linejoin="round"/></svg>
<div class="t" style="left:338.60px;top:865.55px;font-size:15.3px;font-weight:400;color:#101828;letter-spacing:0.55px;-webkit-text-stroke:0.45px #101828;">Included in all plans</div>
<div class="b" style="left:1286.00px;top:862.00px;width:68.70px;height:22.00px;background:#d1fae5;border-radius:11px;"></div>
<div class="t" style="left:1293.50px;top:867.86px;font-size:10.8px;font-weight:400;color:#047857;letter-spacing:-0.3px;-webkit-text-stroke:0.25px #047857;">31 Features</div>
<div class="b" style="left:313.20px;top:900.00px;width:251.50px;height:31.50px;background:#f8f9fb;border-radius:8px;"></div>
<svg class="b" style="left:325.70px;top:911.50px;" width="11" height="9" viewBox="0 0 11 9" fill="none"><path d="M1.2 4.7L3.9 7.3L9.6 1.6" stroke="#059669" stroke-width="1.2" stroke-linecap="round" stroke-linejoin="round"/></svg>
<div class="t" style="left:349.00px;top:910.72px;font-size:12.5px;font-weight:400;color:#344054;letter-spacing:-0.27px;">White Page Access</div>
<div class="b" style="left:576.70px;top:900.00px;width:251.50px;height:31.50px;background:#f8f9fb;border-radius:8px;"></div>
<svg class="b" style="left:589.20px;top:911.50px;" width="11" height="9" viewBox="0 0 11 9" fill="none"><path d="M1.2 4.7L3.9 7.3L9.6 1.6" stroke="#059669" stroke-width="1.2" stroke-linecap="round" stroke-linejoin="round"/></svg>
<div class="t" style="left:612.50px;top:910.72px;font-size:12.5px;font-weight:400;color:#344054;letter-spacing:-0.13px;">Personal Manager</div>
<div class="b" style="left:840.20px;top:900.00px;width:251.50px;height:31.50px;background:#f8f9fb;border-radius:8px;"></div>
<svg class="b" style="left:852.70px;top:911.50px;" width="11" height="9" viewBox="0 0 11 9" fill="none"><path d="M1.2 4.7L3.9 7.3L9.6 1.6" stroke="#059669" stroke-width="1.2" stroke-linecap="round" stroke-linejoin="round"/></svg>
<div class="t" style="left:876.00px;top:910.72px;font-size:12.5px;font-weight:400;color:#344054;letter-spacing:-0.03px;">Unlimited Clicks</div>
<div class="b" style="left:1103.70px;top:900.00px;width:251.50px;height:31.50px;background:#f8f9fb;border-radius:8px;"></div>
<svg class="b" style="left:1116.20px;top:911.50px;" width="11" height="9" viewBox="0 0 11 9" fill="none"><path d="M1.2 4.7L3.9 7.3L9.6 1.6" stroke="#059669" stroke-width="1.2" stroke-linecap="round" stroke-linejoin="round"/></svg>
<div class="t" style="left:1139.50px;top:910.72px;font-size:12.5px;font-weight:400;color:#344054;letter-spacing:0.22px;">Bot &amp; Moderator Protection</div>
<div class="b" style="left:313.20px;top:942.20px;width:251.50px;height:31.50px;background:#f8f9fb;border-radius:8px;"></div>
<svg class="b" style="left:325.70px;top:953.70px;" width="11" height="9" viewBox="0 0 11 9" fill="none"><path d="M1.2 4.7L3.9 7.3L9.6 1.6" stroke="#059669" stroke-width="1.2" stroke-linecap="round" stroke-linejoin="round"/></svg>
<div class="t" style="left:349.00px;top:952.92px;font-size:12.5px;font-weight:400;color:#344054;letter-spacing:-0.33px;">Spy Service Shield</div>
<div class="b" style="left:576.70px;top:942.20px;width:251.50px;height:31.50px;background:#f8f9fb;border-radius:8px;"></div>
<svg class="b" style="left:589.20px;top:953.70px;" width="11" height="9" viewBox="0 0 11 9" fill="none"><path d="M1.2 4.7L3.9 7.3L9.6 1.6" stroke="#059669" stroke-width="1.2" stroke-linecap="round" stroke-linejoin="round"/></svg>
<div class="t" style="left:612.50px;top:952.92px;font-size:12.5px;font-weight:400;color:#344054;letter-spacing:-0.08px;">VPN/Proxy Blocking</div>
<div class="b" style="left:840.20px;top:942.20px;width:251.50px;height:31.50px;background:#f8f9fb;border-radius:8px;"></div>
<svg class="b" style="left:852.70px;top:953.70px;" width="11" height="9" viewBox="0 0 11 9" fill="none"><path d="M1.2 4.7L3.9 7.3L9.6 1.6" stroke="#059669" stroke-width="1.2" stroke-linecap="round" stroke-linejoin="round"/></svg>
<div class="t" style="left:876.00px;top:952.92px;font-size:12.5px;font-weight:400;color:#344054;letter-spacing:-0.3px;">Real-Time Stats</div>
<div class="b" style="left:1103.70px;top:942.20px;width:251.50px;height:31.50px;background:#f8f9fb;border-radius:8px;"></div>
<svg class="b" style="left:1116.20px;top:953.70px;" width="11" height="9" viewBox="0 0 11 9" fill="none"><path d="M1.2 4.7L3.9 7.3L9.6 1.6" stroke="#059669" stroke-width="1.2" stroke-linecap="round" stroke-linejoin="round"/></svg>
<div class="t" style="left:1139.50px;top:952.92px;font-size:12.5px;font-weight:400;color:#344054;letter-spacing:-0.12px;">Advanced Reports</div>
<div class="b" style="left:777.00px;top:988.00px;width:114.00px;height:32.80px;background:#d1fae5;border-radius:8px;"></div>
<svg class="b" style="left:793.50px;top:1000.00px;" width="11" height="7" viewBox="0 0 11 7" fill="none"><path d="M1 1L5.5 5.5L10 1" stroke="#047857" stroke-width="1.4"/></svg>
<div class="t" style="left:811.60px;top:999.05px;font-size:12.7px;font-weight:400;color:#047857;letter-spacing:0.12px;-webkit-text-stroke:0.2px #047857;">Show more</div>
<div class="b" style="left:290.00px;top:1065.00px;width:1088.00px;height:110.00px;background:#fff;border:1px solid #e4e7ec;border-radius:16px;"></div>
<div class="t" style="left:313.10px;top:1096.88px;font-size:15.5px;font-weight:400;color:#101828;letter-spacing:0.5px;-webkit-text-stroke:0.45px #101828;">Payment history</div>
<div class="t" style="left:313.10px;top:1137.42px;font-size:12.5px;font-weight:400;color:#667085;letter-spacing:0.14px;">No payments found.</div>
<div class="b" style="left:1291.30px;top:1088.10px;width:63.20px;height:31.80px;background:#fff;border:1px solid #e1e4ea;border-radius:8px;"></div>
<div class="t" style="left:1303.00px;top:1098.59px;font-size:12.3px;font-weight:400;color:#101828;letter-spacing:-0.6px;">Refresh</div>
</body></html>
